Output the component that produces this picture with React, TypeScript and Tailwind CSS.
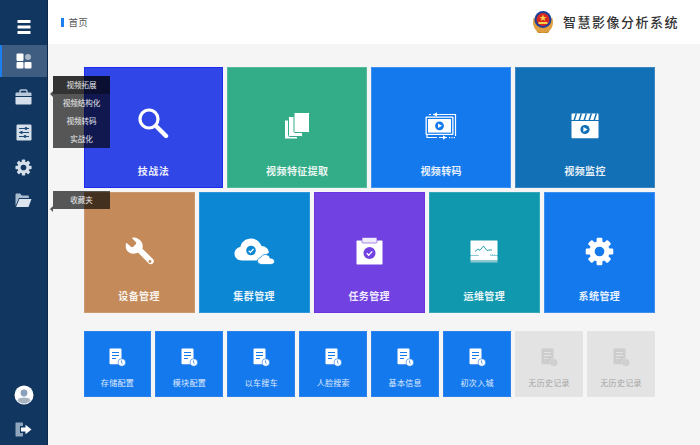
import type { ReactNode } from "react";

const cjk = "font-['Noto_Sans_CJK_SC','Noto_Sans',sans-serif]";

function MenuIcon() {
  return (
    <svg width="14" height="16" viewBox="0 0 14 16" fill="#fff">
      <rect x="0.5" y="1" width="13" height="3" rx="0.5" />
      <rect x="0.5" y="6.5" width="13" height="3" rx="0.5" />
      <rect x="0.5" y="12" width="13" height="3" rx="0.5" />
    </svg>
  );
}

function DashIcon() {
  return (
    <svg width="16" height="16" viewBox="0 0 16 16">
      <rect x="0.5" y="0.5" width="7" height="7.5" rx="1" fill="#fff" />
      <circle cx="12" cy="4" r="3" fill="#a9b8c9" />
      <rect x="0.5" y="9" width="7" height="6.5" rx="1" fill="#fff" />
      <rect x="8.5" y="9" width="7" height="6.5" rx="1" fill="#fff" />
    </svg>
  );
}

function BoxIcon() {
  return (
    <svg width="17" height="16" viewBox="0 0 17 16">
      <path d="M5 4V2.2C5 1.5 5.5 1 6.2 1h4.6c.7 0 1.2.5 1.2 1.2V4" fill="none" stroke="#b9c9da" strokeWidth="1.4" />
      <path d="M1.4 3.5h14.2c.5 0 .9.4.9.9V7H.5V4.4c0-.5.4-.9.9-.9z" fill="#b9c9da" />
      <path d="M.5 8h16v6.6c0 .5-.4.9-.9.9H1.4c-.5 0-.9-.4-.9-.9z" fill="#d5dfe9" />
    </svg>
  );
}

function SlidersIcon() {
  return (
    <svg width="16" height="17" viewBox="0 0 16 17">
      <rect x="0.5" y="0.5" width="15" height="16" rx="1.2" fill="#d5dfe9" />
      <g stroke="#1f4a75" strokeWidth="1">
        <path d="M3 4.5h10M3 8.5h10M3 12.5h10" />
      </g>
      <g fill="#1f4a75">
        <circle cx="10" cy="4.5" r="1.4" />
        <circle cx="5.5" cy="8.5" r="1.4" />
        <circle cx="9" cy="12.5" r="1.4" />
      </g>
    </svg>
  );
}

function GearIcon({ size, fill, hole }: { size: number; fill: string; hole: string }) {
  return (
    <svg width={size} height={size} viewBox="0 0 24 24">
      <g fill={fill}>
        <circle cx="12" cy="12" r="8.4" />
        {[0, 45, 90, 135, 180, 225, 270, 315].map((a) => (
          <rect key={a} x="9.6" y="0.6" width="4.8" height="5.4" rx="1" transform={`rotate(${a} 12 12)`} />
        ))}
      </g>
      <circle cx="12" cy="12" r="4" fill={hole} />
    </svg>
  );
}

function FolderIcon() {
  return (
    <svg width="17" height="15" viewBox="0 0 17 15">
      <path d="M.5 13V1.6C.5 1 1 .5 1.6.5h3.6l1.6 2h6c.6 0 1.1.5 1.1 1.1V5H4L.5 13z" fill="#a9bccf" />
      <path d="M4.4 6h12.1l-3 8H1z" fill="#dbe4ec" />
    </svg>
  );
}

function AvatarIcon() {
  return (
    <svg width="20" height="20" viewBox="0 0 20 20">
      <circle cx="10" cy="10" r="9.5" fill="#fff" />
      <circle cx="10" cy="8" r="3.4" fill="#8ba0bb" />
      <path d="M3.4 15.5C4.4 13 7 12.4 10 12.4s5.6.6 6.6 3.1A8.6 8.6 0 0 1 10 18.6a8.6 8.6 0 0 1-6.6-3.1z" fill="#a9b4c2" />
    </svg>
  );
}

function LogoutIcon() {
  return (
    <svg width="17" height="15" viewBox="0 0 17 15">
      <path d="M1 .5h6c.6 0 1 .4 1 1V4H5v7h3v2.5c0 .6-.4 1-1 1H1c-.3 0-.5-.2-.5-.5V1c0-.3.2-.5.5-.5z" fill="#8fa5bd" />
      <path d="M6 5.5h4.5V2.8l6 4.7-6 4.7V9.5H6z" fill="#fff" />
    </svg>
  );
}

function Emblem() {
  return (
    <svg width="22" height="24" viewBox="0 0 22 24">
      <path d="M2 7c-2 5-1 11 3 14 2 2 9 2 12 0 4-3 5-9 3-14l-3 6H5z" fill="#e0a040" />
      <circle cx="11" cy="9.5" r="8.5" fill="#1f3f9a" />
      <circle cx="11" cy="9.5" r="6.4" fill="#d92a22" />
      <path d="M11 4.5l1 2.4 2.5.1-2 1.6.7 2.4-2.2-1.4-2.2 1.4.7-2.4-2-1.6 2.5-.1z" fill="#f6d24a" />
      <rect x="6.5" y="12" width="9" height="2" fill="#f6d24a" />
      <path d="M4 20c3 3 11 3 14 0l-2 3H6z" fill="#c98a2c" />
    </svg>
  );
}

function SearchIcon() {
  return (
    <svg className="-translate-y-[3px]" width="32" height="32" viewBox="0 0 32 32" fill="none" stroke="#fff">
      <circle cx="12" cy="12" r="9" strokeWidth="3.2" />
      <path d="M20 20l9 9" strokeWidth="4.4" strokeLinecap="round" />
    </svg>
  );
}

function PagesIcon() {
  return (
    <svg width="26" height="28" viewBox="0 0 26 28" fill="#fff" stroke="#33ac88" strokeWidth="1">
      <rect x="0.5" y="8" width="13" height="19" rx="1" />
      <rect x="4.5" y="4.5" width="14" height="20" rx="1" />
      <rect x="10" y="0.5" width="15.5" height="20" rx="1" />
    </svg>
  );
}

function TranscodeIcon() {
  return (
    <svg width="32" height="28" viewBox="0 0 32 28">
      <g fill="none" stroke="#fff" strokeWidth="1.2">
        <path d="M4 2.5h2M12 2.5h18.5V24" />
        <path d="M8 2.5h4" />
        <path d="M22 25.5h-8M2 7v18.5h10" />
      </g>
      <path d="M8.5 2.5l3.5-2.2v4.4z" fill="#fff" />
      <path d="M21.5 25.5L18 23.3v4.4z" fill="#fff" />
      <g fill="#fff">
        <rect x="24" y="25" width="1.2" height="1.2" />
        <rect x="26.4" y="25" width="1.2" height="1.2" />
        <rect x="28.8" y="25" width="1.2" height="1.2" />
      </g>
      <rect x="0.5" y="4.5" width="28" height="18.5" rx="1" fill="#fff" />
      <rect x="1.8" y="5.8" width="25.4" height="16" fill="#1579ee" />
      <rect x="3" y="7" width="23" height="13.6" fill="#fff" />
      <circle cx="14.5" cy="13.8" r="4.4" fill="#1579ee" />
      <path d="M13 11.5l4 2.3-4 2.3z" fill="#fff" />
    </svg>
  );
}

function ClapIcon() {
  return (
    <svg width="28" height="26" viewBox="0 0 28 26">
      <path d="M.5 1.5c0-.6.4-1 1-1h25c.6 0 1 .4 1 1V7H.5z" fill="#fff" />
      <g fill="#1270b6">
        {[3, 8, 13, 18, 23].map((x) => (
          <path key={x} d={`M${x + 1.5} 0.5h1.6l-2 6.5H${x - 0.5}z`} />
        ))}
      </g>
      <path d="M.5 8h27v16c0 .8-.5 1.3-1.2 1.3H1.7C1 25.3.5 24.8.5 24z" fill="#fff" />
      <circle cx="14" cy="16.5" r="4.6" fill="#1270b6" />
      <path d="M12.4 14l4.2 2.5-4.2 2.5z" fill="#fff" />
    </svg>
  );
}

function WrenchIcon() {
  return (
    <svg width="29" height="29" viewBox="0 0 29 29">
      <path d="M7.5.7c-.5-.2-.8.2-.4.6l3.6 3.6c.7.7.7 1.6.1 2.3L8.2 9.8c-.7.6-1.6.6-2.3 0L2 6.2c-.4-.4-.9-.2-1 .3-.7 3-.2 6 2 8.1 2.2 2.2 5.4 2.6 8 1.7l2.2-.6 10.3 10.5c1.4 1.4 3.2 1.4 4.5.1 1.2-1.3 1.2-3.1-.1-4.4L17.4 11.7c.7-3 .2-6-1.8-8C13.4 1.4 10.3-.2 7.5.7z" fill="#fff" />
      <circle cx="25" cy="24.5" r="1.4" fill="#c48a5a" />
    </svg>
  );
}

function CloudIcon() {
  return (
    <svg width="41" height="27" viewBox="0 0 41 27">
      <path d="M8 22.5c-4.5 0-7.5-3-7.5-6.800 0-3.500 2.500-6 5.800-6.700C7.500 4 11.500.5 17 .5c5 0 9 3 10.500 7.500 4 .2 7 2.800 7.500 6.500l-12 8z" fill="#fff" />
      <circle cx="17" cy="12.5" r="4.8" fill="#0c87d4" />
      <path d="M14.7 12.8l1.800 1.600 3-3.400" fill="none" stroke="#fff" strokeWidth="1.2" />
      <path d="M28 26.5c-2.500 0-4.500-1.300-4.500-3.500 0-2 1.500-3.200 3.200-3.400.7-2 2.500-3.100 4.600-3.100 2.500 0 4.300 1.500 4.800 3.600 2.200 0 4.400 1.200 4.400 3.200 0 2.200-1.800 3.200-4 3.200z" fill="#fff" stroke="#0c87d4" strokeWidth="0.8" />
    </svg>
  );
}

function ClipboardIcon() {
  return (
    <svg width="27" height="28" viewBox="0 0 27 28">
      <path d="M1 3.5h25c.3 0 .5.2.5.5v23c0 .3-.2.5-.5.5H1c-.3 0-.5-.2-.5-.5V4c0-.3.2-.5.5-.5z" fill="#fff" />
      <rect x="6" y="0.5" width="15" height="5.5" rx="1" fill="#f0ecfb" stroke="#7141e2" strokeWidth="0.6" />
      <circle cx="13.5" cy="16" r="6" fill="#7141e2" />
      <path d="M10.7 16.2l2 2 3.600-3.800" fill="none" stroke="#fff" strokeWidth="1.3" />
    </svg>
  );
}

function MonitorIcon() {
  return (
    <svg width="28" height="23" viewBox="0 0 28 23">
      <rect x="0.5" y="0.5" width="27" height="15" fill="#fff" />
      <path d="M5 11.5l3-2.500 2 1.300 3.500-4.300 3.500 4.500 2-.5h3" fill="none" stroke="#1099ae" strokeWidth="0.9" />
      <path d="M.5 16h8l1-2h10l1 2h7v4H.5z" fill="#fff" />
      <rect x="0.5" y="20" width="27" height="2.5" fill="#8fc7d2" />
      <g fill="#a6dbe3">
        <rect x="20" y="14" width="1" height="1" />
        <rect x="22" y="14" width="1" height="1" />
        <rect x="24" y="14" width="1" height="1" />
      </g>
    </svg>
  );
}

function DocClockIcon({ main, bg }: { main: string; bg: string }) {
  return (
    <svg width="17" height="19" viewBox="0 0 17 19">
      <path d="M1.2.5h10.600c.4 0 .7.3.7.7V15.500c0 .4-.3.7-.7.7H1.200c-.4 0-.7-.3-.7-.7V1.200c0-.4.3-.7.7-.7z" fill={main} />
      <g stroke={bg} strokeWidth="1">
        <path d="M3 4.5h7M3 7.5h7M3 10.5h4" />
      </g>
      <circle cx="12.8" cy="14.5" r="3.8" fill={main} stroke={bg} strokeWidth="0.6" />
      <path d="M12.5 12.5v2.200l1.200 1" fill="none" stroke={bg} strokeWidth="0.7" />
    </svg>
  );
}

function BigTile({ label, bg, edge, icon }: { label: string; bg: string; edge: string; icon: ReactNode }) {
  return (
    <div className={`relative flex flex-1 flex-col items-center border ${bg} ${edge}`}>
      <div className="flex h-[88px] w-full items-center justify-center pt-[28px]">{icon}</div>
      <div className="mt-[8px] text-[10px] font-bold leading-[14px] tracking-[0.4px] text-white/90">{label}</div>
    </div>
  );
}

function SmallTile({ label, off }: { label: string; off?: boolean }) {
  return (
    <div
      className={`flex flex-1 flex-col items-center border ${
        off ? "border-[#e4e4e4] bg-[#e3e3e3]" : "border-[#2b82ec] bg-[#1579ee]"
      }`}
    >
      <div className="mt-[16px] h-[19px]">
        {off ? <DocClockIcon main="#cdcdcd" bg="#e3e3e3" /> : <DocClockIcon main="#fff" bg="#1579ee" />}
      </div>
      <div
        className={`mt-[10px] text-[8px] leading-[12px] tracking-[0.3px] ${off ? "text-[#a5a5a5]" : "text-white/85"}`}
      >
        {label}
      </div>
    </div>
  );
}

function Tip({ items, className }: { items: string[]; className: string }) {
  return (
    <div className={`absolute left-[53px] z-10 w-[57px] bg-black/65 text-center text-[7.5px] leading-[18px] text-white/90 ${className}`}>
      <span className="absolute left-[-3px] top-[15px] h-0 w-0 border-y-[3px] border-r-[3px] border-y-transparent border-r-[#555]" />
      {items.map((t, i) => (
        <div key={t} className={i === 0 && items.length > 1 ? "bg-black/40" : ""}>
          {t}
        </div>
      ))}
    </div>
  );
}

export default function App() {
  return (
    <div className={`relative flex h-[445px] w-[700px] overflow-hidden bg-[#f5f5f5] ${cjk}`}>
      <aside className="flex w-[48px] shrink-0 flex-col items-center border-r border-[#0c2747] bg-[#11365f]">
        <div className="flex h-[45px] w-full items-center justify-center pt-[9px]">
          <MenuIcon />
        </div>
        <div className="flex h-[32px] w-full items-center justify-center border-l-2 border-[#1c7ff0] bg-[#3f5d80] pr-[2px]">
          <DashIcon />
        </div>
        <div className="flex h-[40px] w-full items-center justify-center">
          <BoxIcon />
        </div>
        <div className="flex h-[30px] w-full items-center justify-center">
          <SlidersIcon />
        </div>
        <div className="flex h-[40px] w-full items-center justify-center">
          <GearIcon size={17} fill="#d5dfe9" hole="#11365f" />
        </div>
        <div className="flex h-[26px] w-full items-center justify-center">
          <FolderIcon />
        </div>
        <div className="mt-auto flex h-[24px] w-full items-center justify-center">
          <AvatarIcon />
        </div>
        <div className="mb-[6px] mt-[12px] flex h-[20px] w-full items-center justify-center">
          <LogoutIcon />
        </div>
      </aside>

      <div className="flex min-w-0 flex-1 flex-col">
        <header className="flex h-[44px] shrink-0 items-center bg-white pl-[13px] pr-[21px]">
          <span className="h-[9px] w-[2.5px] bg-[#1c7ff0]" />
          <span className="ml-[5px] text-[9.5px] tracking-[0.2px] text-[#555]">首页</span>
          <div className="ml-auto flex items-center gap-[9px]">
            <Emblem />
            <span className="text-[13px] font-medium tracking-[1.5px] text-[#333]">智慧影像分析系统</span>
          </div>
        </header>

        <main className="flex flex-1 flex-col pl-[35.5px] pr-[45px] pt-[23px]">
          <div className="flex h-[121px] gap-[4px]">
            <BigTile label="技战法" bg="bg-[#3146e6]" edge="border-[#1b2cf0]" icon={<SearchIcon />} />
            <BigTile label="视频特征提取" bg="bg-[#33ac88]" edge="border-[#55ba9c]" icon={<PagesIcon />} />
            <BigTile label="视频转码" bg="bg-[#1579ee]" edge="border-[#3f8ff0]" icon={<TranscodeIcon />} />
            <BigTile label="视频监控" bg="bg-[#1270b6]" edge="border-[#3c87c2]" icon={<ClapIcon />} />
          </div>
          <div className="mt-[4px] flex h-[121px] gap-[4px]">
            <BigTile label="设备管理" bg="bg-[#c48a5a]" edge="border-[#cc9a70]" icon={<WrenchIcon />} />
            <BigTile label="集群管理" bg="bg-[#0c87d4]" edge="border-[#2e97da]" icon={<CloudIcon />} />
            <BigTile label="任务管理" bg="bg-[#7141e2]" edge="border-[#6a35e0]" icon={<ClipboardIcon />} />
            <BigTile label="运维管理" bg="bg-[#1099ae]" edge="border-[#35a7b8]" icon={<MonitorIcon />} />
            <BigTile label="系统管理" bg="bg-[#1579ee]" edge="border-[#3f8ff0]" icon={<GearIcon size={29} fill="#fff" hole="#1579ee" />} />
          </div>
          <div className="mt-[18px] flex h-[66px] gap-[4px]">
            {["存储配置", "模块配置", "以车搜车", "人脸搜索", "基本信息", "初次入城"].map((t) => (
              <SmallTile key={t} label={t} />
            ))}
            <SmallTile label="无历史记录" off />
            <SmallTile label="无历史记录" off />
          </div>
        </main>
      </div>

      <Tip items={["视频拓展", "视频结构化", "视频转码", "实战化"]} className="top-[76px]" />
      <Tip items={["收藏夹"]} className="top-[191px]" />
    </div>
  );
}
